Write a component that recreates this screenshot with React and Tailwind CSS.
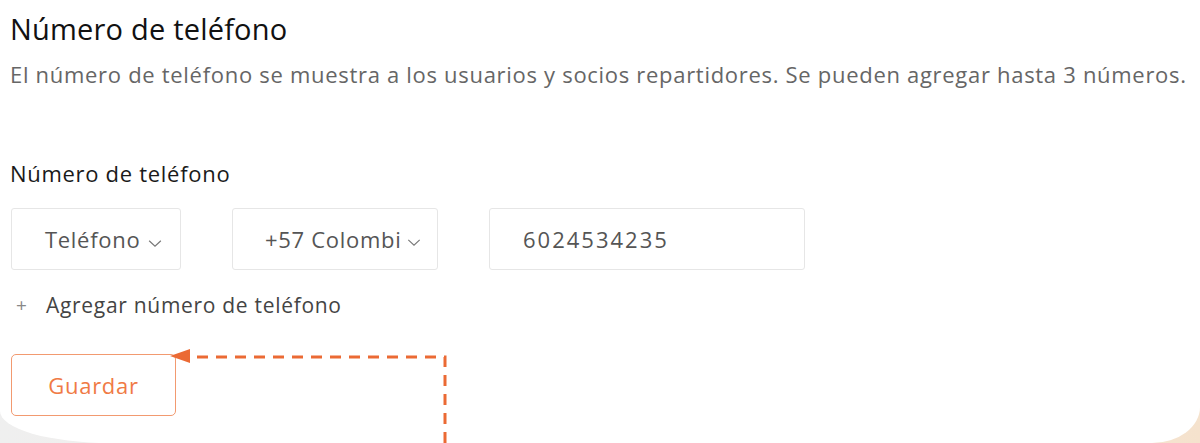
import React from "react";

function Chevron({ className }) {
  return (
    <svg viewBox="0 0 16 10" className={className} fill="none" stroke="currentColor" strokeWidth="1.3">
      <path d="M1.5 2 L8 8 L14.5 2" />
    </svg>
  );
}

function Field({ width, children, chevron }) {
  return (
    <div
      className={`flex h-[62px] items-center rounded-[3px] border border-[#e6e6e6] bg-white ${width}`}
    >
      {children}
      {chevron}
    </div>
  );
}

export default function App() {
  return (
    <div
      className="h-[443px] w-[1200px] overflow-hidden bg-gradient-to-r from-[#efefef] via-[#f6efe8] to-[#f5e2cd]"
      style={{ fontFamily: "'Open Sans', 'Noto Sans', sans-serif" }}
    >
      <div className="relative h-[443px] rounded-bl-[110px_32px] rounded-br-[48px_36px] bg-white px-[10px] pt-[10px]">
        {/* Header */}
        <h1 className="text-[29px] leading-[38px] tracking-[0.2px] text-[#111]">Número de teléfono</h1>
        <p className="mt-[12px] whitespace-nowrap text-[22px] leading-[28px] tracking-[0.7px] text-[#666]">
          El número de teléfono se muestra a los usuarios y socios repartidores. Se pueden agregar hasta 3 números.
        </p>

        {/* Phone form */}
        <div className="mt-[71px] text-[22px] leading-[28px] tracking-[0.7px] text-[#1a1a1a]">Número de teléfono</div>
        <div className="mt-[21px] flex gap-[51px] pl-[1px]">
          <Field width="w-[170px]" chevron={<Chevron className="ml-[7px] mt-[8px] h-[9px] w-[16px] text-[#777]" />}>
            <span className="pl-[33px] text-[22px] tracking-[0.7px] text-[#555]">Teléfono</span>
          </Field>
          <Field width="w-[206px]" chevron={<Chevron className="ml-[5px] mt-[6px] h-[9px] w-[14px] text-[#777]" />}>
            <span className="w-[169px] shrink-0 overflow-hidden whitespace-nowrap pl-[32px] text-[22px] tracking-[0.7px] text-[#555]">+57 Colombia</span>
          </Field>
          <Field width="w-[316px]">
            <span className="pl-[33px] text-[22px] tracking-[2px] text-[#555]">6024534235</span>
          </Field>
        </div>

        <div className="mt-[21px] flex items-center text-[21px] leading-[28px] tracking-[0.7px] text-[#444]">
          <span className="w-[36px] pl-[6px] text-[19px] text-[#888]">+</span>
          <span>Agregar número de teléfono</span>
        </div>

        <button className="mt-[35px] ml-[1px] h-[62px] w-[165px] rounded-[5px] border border-[#f29a70] text-[22px] tracking-[0.7px] text-[#f07a45]">
          Guardar
        </button>

        {/* Dashed annotation arrow */}
        <svg className="absolute left-0 top-0" width="1200" height="443" viewBox="0 0 1200 443">
          <path
            d="M445 443 L445 357 L186 357"
            fill="none"
            stroke="#eb6a34"
            strokeWidth="3"
            strokeDasharray="11 8"
          />
          <polygon points="170,356 190,349 190,363" fill="#eb6a34" />
        </svg>
      </div>
    </div>
  );
}
